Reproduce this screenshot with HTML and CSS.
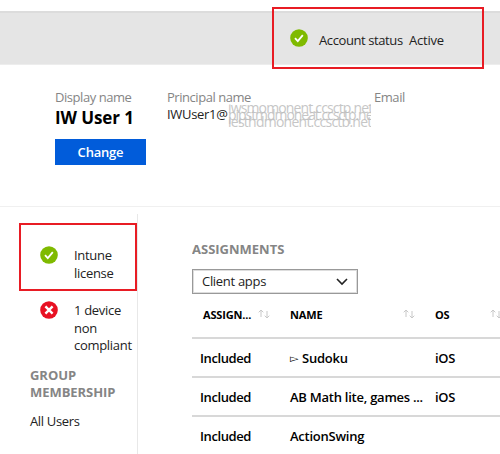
FILE: index.html
```html
<!DOCTYPE html>
<html lang="en">
<head>
<meta charset="utf-8">
<title>User troubleshooting</title>
<link rel="stylesheet" href="styles.css">
</head>
<body>
<header class="banner">
  <div class="callout account">
    <svg class="status" viewBox="0 0 18 18"><circle cx="9" cy="9" r="8.8" fill="#7fba00"/><path d="M5 9.2l2.800 3 5-6" fill="none" stroke="#fff" stroke-width="1.8"/></svg>
    <span class="account-label">Account status</span><span class="account-value">Active</span>
  </div>
</header>
<section class="profile">
  <div class="display">
    <div class="label">Display name</div>
    <div class="user">IW User 1</div>
    <button class="change">Change</button>
  </div>
  <div class="principal">
    <div class="label">Principal name</div>
    <div class="upn"><span class="upn-name">IWUser1@</span><span class="masked"><span>iwsmomonent.ccsctp.net</span><span>pipstmdmoneat.ccsctp.ne</span><span>iesthdmonent.ccsctp.net</span></span></div>
  </div>
  <div class="email"><div class="label">Email</div></div>
</section>
<main class="content">
  <aside class="side">
    <div class="callout license">
      <svg class="status" viewBox="0 0 18 18"><circle cx="9" cy="9" r="8.8" fill="#7fba00"/><path d="M5 9.2l2.800 3 5-6" fill="none" stroke="#fff" stroke-width="1.8"/></svg>
      <div class="side-text">Intune<br>license</div>
    </div>
    <div class="device">
      <svg class="status" viewBox="0 0 18 18"><circle cx="9" cy="9" r="8.8" fill="#e81123"/><path d="M5.4 5.4l7.2 7.2M12.6 5.4l-7.2 7.2" stroke="#fff" stroke-width="2.4"/></svg>
      <div class="side-text">1 device<br>non<br>compliant</div>
    </div>
    <h2 class="heading group">GROUP<br>MEMBERSHIP</h2>
    <div class="all-users">All Users</div>
  </aside>
  <section class="assignments">
    <h2 class="heading assign-title">ASSIGNMENTS</h2>
    <div class="select"><span>Client apps</span><svg class="chevron" viewBox="0 0 12 8"><path d="M1 1l5 5 5-5" fill="none" stroke="#222" stroke-width="1.6"/></svg></div>
    <div class="row head">
      <div class="c1"><span class="h-assign">ASSIGN...</span><svg class="sort" viewBox="0 0 12 10"><path d="M3 8V1M.7 3.3L3 1l2.300 2.300M9 2v7M6.700 6.700L9 9l2.300-2.300" fill="none" stroke="#c8c8c8"/></svg></div>
      <div class="c2"><span class="h-name">NAME</span><svg class="sort" viewBox="0 0 12 10"><path d="M3 8V1M.7 3.3L3 1l2.300 2.300M9 2v7M6.700 6.700L9 9l2.300-2.300" fill="none" stroke="#c8c8c8"/></svg></div>
      <div class="c3"><span class="h-os">OS</span><svg class="sort" viewBox="0 0 12 10"><path d="M3 8V1M.7 3.3L3 1l2.300 2.300M9 2v7M6.700 6.700L9 9l2.300-2.300" fill="none" stroke="#c8c8c8"/></svg></div>
    </div>
    <div class="row"><div class="c1">Included</div><div class="c2"><span class="marker">▻</span><span>Sudoku</span></div><div class="c3">iOS</div></div>
    <div class="row"><div class="c1">Included</div><div class="c2">AB Math lite, games ...</div><div class="c3">iOS</div></div>
    <div class="row last"><div class="c1">Included</div><div class="c2">ActionSwing</div><div class="c3"></div></div>
  </section>
</main>
</body>
</html>
```
FILE: styles.css
```css
* { box-sizing: border-box; }
body {
  margin: 0;
  padding-top: 11px;
  width: 500px;
  height: 454px;
  overflow: hidden;
  background: #fff;
  color: #222;
  font: 13px/17.5px "Open Sans", "Noto Sans", sans-serif;
  letter-spacing: -0.3px;
}
.banner {
  height: 54px;
  background: #e5e5e5;
  border-top: 2px solid #dcdcdc;
  border-bottom: 1px solid #ededed;
}
.callout { border: 2px solid #e81c24; display: flex; }
.account {
  width: 212px;
  height: 62px;
  margin: -6px 0 0 272px;
  padding-left: 16px;
  align-items: center;
  position: relative;
}
.status { width: 18px; height: 18px; flex: none; }
.account-label { margin-left: 11px; width: 90px; white-space: nowrap; padding-top: 5px; letter-spacing: -0.4px; }
.account-value { padding-top: 5px; letter-spacing: -0.2px; }
.profile { display: flex; height: 141px; padding: 23px 0 0 55px; }
.display { width: 112px; }
.principal { width: 207px; }
.label { color: #858585; height: 18px; line-height: 18px; letter-spacing: -0.45px; }
.user { color: #000; font-size: 17px; font-weight: 700; line-height: 24px; letter-spacing: -0.1px; white-space: nowrap; }
.change {
  display: block;
  width: 91px;
  height: 26px;
  margin-top: 9px;
  padding: 0;
  border: 0;
  background: #015cda;
  color: #fff;
  font: 600 13px/26px "Open Sans", sans-serif;
  letter-spacing: -0.2px;
}
.upn { display: flex; height: 18px; line-height: 17px; }
.upn-name { width: 61px; white-space: nowrap; }
.masked {
  position: relative;
  width: 143px;
  height: 23px;
  margin-top: -2px;
  overflow: hidden;
  color: #bdbdbd;
  font-size: 14px;
}
.masked span { position: absolute; left: 0; top: -5px; white-space: nowrap; letter-spacing: -0.85px; opacity: 0.85; }
.masked span:nth-child(2) { top: 2px; letter-spacing: -1.05px; }
.masked span:nth-child(3) { top: 9px; letter-spacing: -0.75px; }
.content { display: flex; height: 248px; border-top: 1px solid #f0f0f0; }
.side { width: 138px; margin-top: 7px; border-right: 1px solid #e8e8e8; }
.license { width: 118px; height: 68px; margin: 9px 0 0 19px; padding: 21px 0 0 19px; position: relative; }
.side-text { margin: 1px 0 0 16px; white-space: nowrap; }
.device { display: flex; margin: 10px 0 0 40px; }
.heading { margin: 0; font-size: 13px; line-height: 17.5px; font-weight: 700; color: #858585; letter-spacing: 0; }
.group { margin: 12px 0 0 30px; letter-spacing: -0.05px; }
.all-users { margin: 11px 0 0 30px; letter-spacing: -0.35px; }
.assignments { width: 308px; margin-left: 54px; padding-top: 34px; overflow: hidden; }
.assign-title { height: 28px; }
.select {
  display: flex;
  align-items: center;
  justify-content: space-between;
  width: 166px;
  height: 25px;
  border: 1px solid #999;
  outline: 1px solid #ddd;
  outline-offset: -2px;
  padding: 1px 9px 0;
}
.chevron { width: 12px; height: 8px; }
.row {
  display: flex;
  align-items: center;
  height: 39px;
  padding-top: 2px;
  border-bottom: 2px solid #d8d8d8;
  color: #000;
  font-weight: 600;
  letter-spacing: -0.25px;
  white-space: nowrap;
}
.head { height: 45px; font-size: 11px; font-weight: 700; padding: 0 0 1px; }
.last { border-color: transparent; }
.c1 { width: 98px; padding-left: 8px; flex: none; letter-spacing: -0.4px; }
.c2 { width: 145px; flex: none; display: flex; align-items: center; }
.c3 { width: 73px; flex: none; }
.head div { display: flex; align-items: center; letter-spacing: -0.15px; }
.head .c1 { padding-left: 11px; }
.h-assign { width: 55px; }
.h-name { width: 113px; }
.h-os { width: 55px; }
.sort { width: 12px; height: 10px; margin-top: -3px; flex: none; }
.marker { font-family: "DejaVu Sans", sans-serif; font-size: 11px; width: 12px; }
```
